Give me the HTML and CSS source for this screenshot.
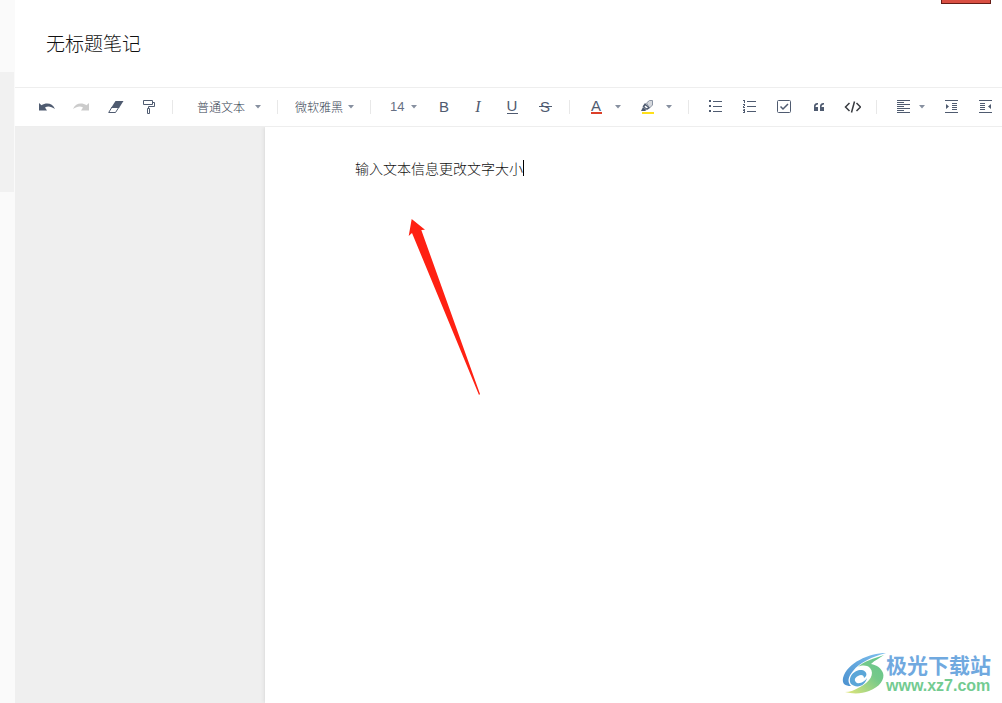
FILE: index.html
```html
<!DOCTYPE html>
<html lang="zh-CN">
<head>
<meta charset="utf-8">
<title>无标题笔记</title>
<link rel="stylesheet" href="styles.css">
</head>
<body>
<div class="app">
  <aside class="notes"><div class="note-current"></div></aside>
  <main class="main">
    <header class="header">
      <h1 class="title">无标题笔记</h1>
      <button class="record" aria-label="关闭"></button>
    </header>
    <div class="toolbar" role="toolbar" aria-label="格式">
      <div class="group history">
        <button class="tool" aria-label="撤销"><svg class="icon" viewBox="0 0 18 18"><path d="M1 5L3.500 7.300C8 4 14.500 4.800 17 11C13 8 9.500 7.700 7 9.500L9 12.500H1Z" fill="#4f5b70"/></svg></button>
        <button class="tool" aria-label="重做"><svg class="icon" viewBox="0 0 18 18"><path d="M17 5L14.500 7.300C10 4 3.500 4.800 1 11C5 8 8.500 7.700 11 9.500L9 12.500H17Z" fill="#cbcbcb"/></svg></button>
        <button class="tool" aria-label="清除格式"><svg class="icon" viewBox="0 0 18 18"><path d="M9.500 3H17.500L13 10H5Z" fill="#4f5b70"/><path d="M6 9L2.700 14.500H9.500L13 9" fill="none" stroke="#4f5b70"/></svg></button>
        <button class="tool" aria-label="格式刷"><svg class="icon" viewBox="0 0 18 18" fill="none" stroke="#4f5b70"><path d="M3.500 2.500h9v4h-9zM12.500 4.500h2v4h-6v2M7.500 10.500h2v5h-2z"/></svg></button>
      </div>
      <div class="group style-group">
        <label class="pick pick-style"><select class="select" aria-label="段落样式"><option>普通文本</option></select><svg class="caret" viewBox="0 0 10 6"><path d="M2 1h6L5 4.500z"/></svg></label>
      </div>
      <div class="group font-group">
        <label class="pick pick-font"><select class="select" aria-label="字体"><option>微软雅黑</option></select><svg class="caret" viewBox="0 0 10 6"><path d="M2 1h6L5 4.500z"/></svg></label>
      </div>
      <div class="group text-group">
        <label class="pick pick-size"><select class="select" aria-label="字号"><option>14</option></select><svg class="caret" viewBox="0 0 10 6"><path d="M2 1h6L5 4.500z"/></svg></label>
        <button class="tool" aria-label="粗体"><svg class="icon" viewBox="0 0 18 18"><text class="glyph" x="9" y="14">B</text></svg></button>
        <button class="tool" aria-label="斜体"><svg class="icon" viewBox="0 0 18 18"><text class="glyph glyph-italic" x="9" y="14">I</text></svg></button>
        <button class="tool" aria-label="下划线"><svg class="icon" viewBox="0 0 18 18"><text class="glyph" x="9" y="13">U</text><path d="M4 15.500h11" stroke="#4f5b70"/></svg></button>
        <button class="tool" aria-label="删除线"><svg class="icon" viewBox="0 0 18 18"><text class="glyph" x="8" y="14">S</text><path d="M2 8.500h13" stroke="#4f5b70"/></svg></button>
      </div>
      <div class="group color-group">
        <div class="split">
          <button class="tool tool-narrow" aria-label="文字颜色"><svg class="icon" viewBox="0 0 18 18"><text class="glyph" x="9" y="13">A</text><path d="M4 14h11v2H4z" fill="#dc3f28"/></svg></button>
          <button class="more" aria-label="更多文字颜色"><svg class="caret" viewBox="0 0 10 6"><path d="M2 1h6L5 4.500z"/></svg></button>
        </div>
        <div class="split">
          <button class="tool tool-narrow" aria-label="背景颜色"><svg class="icon" viewBox="0 0 18 18"><path d="M8.500 5L11.500 2.500H14.500V7L11.500 10Z" fill="#d5d8dd" stroke="#8b94a3"/><path d="M7 5L12 10L9 12L4.500 8.500Z" fill="#4f5b70"/><path d="M5 9L3 13H7L8.500 12Z" fill="#4f5b70"/><path d="M7.300 7.500L10 9.500L8.500 10.300L6.500 8.700Z" fill="#fff"/><path d="M4 14h12v2H4z" fill="#ffe01a"/></svg></button>
          <button class="more" aria-label="更多背景颜色"><svg class="caret" viewBox="0 0 10 6"><path d="M2 1h6L5 4.500z"/></svg></button>
        </div>
      </div>
      <div class="group list-group">
        <button class="tool" aria-label="无序列表"><svg class="icon" viewBox="0 0 18 18" fill="#4f5b70"><path d="M2 2h2v2H2zM2 7h2v2H2zM2 12h2v2H2zM6 3h9v1H6zM6 8h9v1H6zM6 13h9v1H6z"/></svg></button>
        <button class="tool" aria-label="有序列表"><svg class="icon" viewBox="0 0 18 18" fill="#4f5b70"><path d="M2 2h2v3H3V3H2zM2 6h2v2H3v1h1v1H2V8h1V7H2zM2 11h2v4H2v-1h1v-1H2v-1h1zM6 3h9v1H6zM6 8h9v1H6zM6 13h9v1H6z"/></svg></button>
        <button class="tool" aria-label="待办"><svg class="icon" viewBox="0 0 18 18" fill="none" stroke="#4f5b70"><rect x="2.500" y="2.500" width="13" height="12" rx="1"/><path d="M5.500 8.500L8 11L13 6" stroke-width="1.500"/></svg></button>
        <button class="tool" aria-label="引用"><svg class="icon" viewBox="0 0 18 18" fill="#4f5b70"><path d="M9 5V6.500C7.500 6.500 6.500 7.500 6.500 9H9V13H5V9C5 6 6 5 9 5ZM15 5V6.500C13.500 6.500 12.500 7.500 12.500 9H15V13H11V9C11 6 12 5 15 5Z"/></svg></button>
        <button class="tool" aria-label="代码"><svg class="icon" viewBox="0 0 18 18" fill="none" stroke="#383b40" stroke-width="1.500"><path d="M6.500 5L2.500 9L6.500 13M13.500 5L17.500 9L13.500 13M11.500 3.500L8.500 14.500"/></svg></button>
      </div>
      <div class="group align-group">
        <div class="split split-tight">
          <button class="tool tool-narrow" aria-label="左对齐"><svg class="icon" viewBox="0 0 18 18" fill="#4f5b70"><path d="M2 2h13v1H2zM2 4h7v1H2zM2 6h13v1H2zM2 8h7v1H2zM2 10h13v1H2zM2 12h7v1H2zM2 14h13v1H2z"/></svg></button>
          <button class="more" aria-label="更多对齐方式"><svg class="caret" viewBox="0 0 10 6"><path d="M2 1h6L5 4.500z"/></svg></button>
        </div>
        <button class="tool" aria-label="增加缩进"><svg class="icon" viewBox="0 0 18 18" fill="#4f5b70"><path d="M2 2h13v1H2zM2 14h13v1H2zM9 5h5v1H9zM9 7h5v1H9zM9 9h5v1H9zM9 11h5v1H9zM3 6L6 8.500L3 11z"/></svg></button>
        <button class="tool" aria-label="减少缩进"><svg class="icon" viewBox="0 0 18 18" fill="#4f5b70"><path d="M2 2h13v1H2zM2 14h13v1H2zM3 5h5v1H3zM3 7h5v1H3zM3 9h5v1H3zM3 11h5v1H3zM14 6L11 8.500L14 11z"/></svg></button>
      </div>
    </div>
    <div class="desk">
      <article class="page"><p class="line">输入文本信息更改文字大小<span class="cursor"></span></p></article>
    </div>
  </main>
  <svg class="pointer" viewBox="0 0 72 176"><path d="M3.700 0L17 10.700L13.300 11L72 175L71 176L4 14L0.700 17Z" fill="#ff2113"/></svg>
  <div class="brand">
    <svg class="brand-mark" viewBox="0 0 44 42">
      <defs>
        <linearGradient id="blue" x1="0" y1="1" x2="1" y2="0"><stop offset="0" stop-color="#4b91cf"/><stop offset="1" stop-color="#7fc0ee"/></linearGradient>
        <linearGradient id="green" x1="0" y1="1" x2="1" y2="0"><stop offset="0" stop-color="#e3e67a"/><stop offset=".6" stop-color="#75c98a"/><stop offset="1" stop-color="#63c58c"/></linearGradient>
      </defs>
      <path d="M44 0C27 0 5 10 1 25C0 31 3 33 9 33C5 29 6 24 11 18C18 9 30 4 44 0Z" fill="url(#blue)"/>
      <path d="M42 2C33 5 20 9 16 14C20 12 25 12 28 15C33 21 28 29 18 34C13 37 8 39 3 39C10 41 20 41 27 38C38 34 43 26 41 20C39 15 35 12 29 11C33 7 38 5 42 2Z" fill="url(#green)"/>
      <path d="M9 31C5 24 13 16 20 17C25 18 26 23 22 25C22 22 19 21 16 23C12 25 12 28 15 30C19 31 23 28 25 25C23 33 15 36 9 31Z" fill="#5ba6d8"/>
    </svg>
    <div class="brand-text"><span class="brand-name">极光下载站</span><span class="brand-url">www.xz7.com</span></div>
  </div>
</div>
</body>
</html>
```
FILE: styles.css
```css
* { box-sizing: border-box; }
body {
  margin: 0;
  background: #fff;
  color: #111;
  font-family: "Noto Sans CJK SC", sans-serif;
}
button { padding: 0; border: 0; background: none; }
.app {
  position: relative;
  display: flex;
  min-height: 100vh;
  overflow: hidden;
}
.notes {
  flex: none;
  width: 15px;
  padding-top: 72px;
  background: #fafafa;
}
.note-current { height: 120px; margin-right: 1px; background: #f1f1f1; }
.main { flex: 1; min-width: 0; display: flex; flex-direction: column; }
.header {
  display: flex;
  justify-content: space-between;
  align-items: flex-start;
  padding: 0 11px 0 31px;
  height: 87px;
}
.title {
  margin: 29px 0 0;
  font-size: 19px;
  font-weight: 300;
  line-height: 28px;
}
.record {
  width: 50px;
  height: 4px;
  border: 1px solid #661c16;
  border-top: 0;
  background: #d94f43;
}
.toolbar {
  display: flex;
  height: 40px;
  border-top: 1px solid #eee;
  border-bottom: 1px solid #eee;
}
.group {
  position: relative;
  flex: none;
  display: flex;
  align-items: center;
}
.group + .group::before {
  content: "";
  position: absolute;
  left: 0;
  width: 1px;
  height: 14px;
  background: #e8e8e8;
}
.history { padding: 0 6px 0 15px; }
.style-group { padding: 0 14px 0 25px; }
.font-group { padding: 0 14px 0 18px; }
.text-group { padding: 0 6px 0 20px; }
.color-group { padding: 0 14px; gap: 11px; }
.list-group { padding: 0 7px 0 11px; }
.align-group { padding-left: 15px; }
.tool {
  display: flex;
  align-items: center;
  justify-content: center;
  width: 34px;
  height: 34px;
}
.tool-narrow { width: 26px; }
.icon { width: 18px; height: 18px; }
.split { display: flex; align-items: center; gap: 4px; }
.split-tight { gap: 0; margin-right: 8px; }
.more { display: flex; align-items: center; width: 10px; height: 34px; }
.caret { flex: none; width: 10px; height: 6px; fill: #8790a0; }
.pick { display: flex; align-items: center; justify-content: space-between; }
.pick-style { width: 66px; }
.pick-font { width: 61px; }
.pick-size { width: 29px; margin-right: 8px; }
.select {
  appearance: none;
  margin: 0;
  padding: 0;
  border: 0;
  background: none;
  color: #343e50;
  font-family: "Noto Sans CJK SC", sans-serif;
  font-size: 12px;
  font-weight: 300;
  line-height: 18px;
}
.pick-size .select {
  color: #667084;
  font-family: "Liberation Sans", sans-serif;
  font-size: 13px;
}
.glyph {
  fill: #4f5b70;
  font-family: "Liberation Sans", sans-serif;
  font-size: 15px;
  text-anchor: middle;
}
.glyph-italic { font-family: "Liberation Serif", serif; font-size: 16px; font-style: italic; }
.desk { flex: 1; display: flex; padding-left: 250px; background: #efefef; }
.page {
  flex: 1;
  padding: 29px 90px;
  background: #fff;
  box-shadow: 0 0 4px #d0d0d0;
  clip-path: inset(0 0 0 -4px);
}
.line {
  display: flex;
  align-items: center;
  margin: 0;
  font-size: 14px;
  font-weight: 300;
  line-height: 24px;
}
.cursor { width: 1px; height: 16px; background: #000; }
.pointer { position: absolute; left: 408px; top: 219px; width: 72px; height: 176px; }
.brand {
  position: absolute;
  right: 11px;
  bottom: 7px;
  display: flex;
  align-items: center;
}
.brand-mark { width: 44px; height: 42px; }
.brand-text { display: flex; flex-direction: column; }
.brand-name { color: #70a9df; font-size: 21px; font-weight: 700; line-height: 24px; }
.brand-url {
  color: #73cb91;
  font-family: "Liberation Sans", sans-serif;
  font-size: 16px;
  font-weight: 700;
  line-height: 20px;
}
```
